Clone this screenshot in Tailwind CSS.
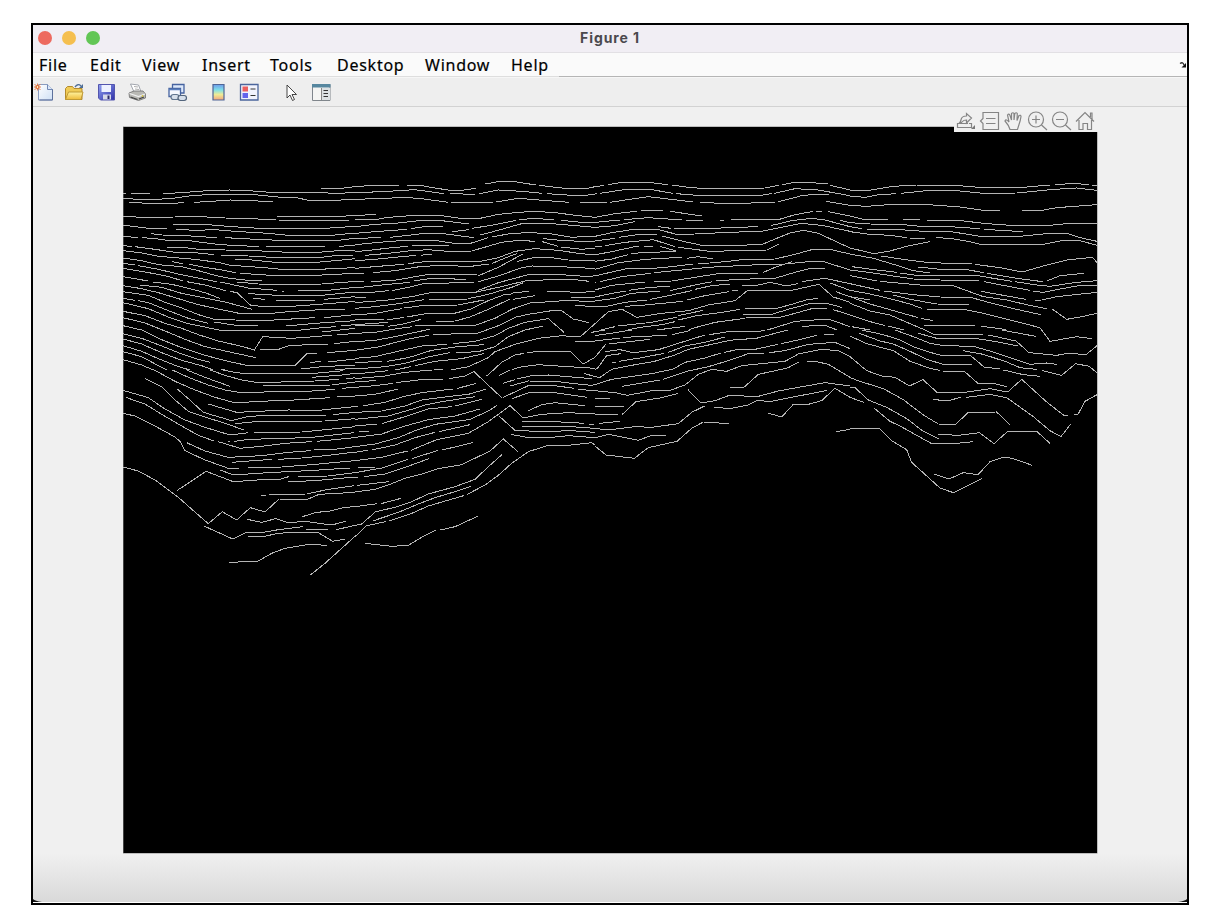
<!DOCTYPE html>
<html lang="en">
<head>
<meta charset="utf-8">
<title>Figure 1</title>
<script src="https://cdn.jsdelivr.net/npm/@tailwindcss/browser@4"></script>
</head>
<body class="bg-white w-[1220px] h-[918px] overflow-hidden pt-[23px] pl-[31px]">
<main class="w-[1158px] h-[882px] border-2 border-black bg-[#f0f0f0] flex flex-col">
  <header class="h-[28px] shrink-0 bg-[#f1eef4] border-b border-[#e2e0e4] grid grid-cols-[1fr_auto_1fr] items-center">
    <div class="flex gap-[10px] pl-[5px] pb-[2px]">
      <span class="size-[14px] rounded-full bg-[#ed6a5f]"></span>
      <span class="size-[14px] rounded-full bg-[#f5bf4f]"></span>
      <span class="size-[14px] rounded-full bg-[#62c655]"></span>
    </div>
    <h1 class="font-[Inter,sans-serif] font-bold text-[14px] leading-none tracking-[0.9px] text-[#4b494d] pb-[2px]">Figure 1</h1>
  </header>
  <nav class="h-[24px] shrink-0 bg-[#fafafa] flex items-stretch font-['Noto_Sans',sans-serif] text-[16px] leading-[25px] tracking-[0.75px] text-black">
    <div class="grid grid-cols-[51px_52px_60px_68px_67px_88px_86px_48px] pl-[6px] w-[526px] border-b border-[#dedede] [-webkit-text-stroke:0.2px_black]">
      <span>File</span><span>Edit</span><span>View</span><span>Insert</span><span>Tools</span><span>Desktop</span><span>Window</span><span>Help</span>
    </div>
    <div class="grow border-b border-[#b5b5b5] flex justify-end items-center">
      <svg class="w-[8px] h-[8px]" viewBox="0 0 8 8"><path d="M1 2.500Q4 .5 5 4" fill="none" stroke="#333" stroke-width="1.300"/><path d="M7 2v4.500H2.500z" fill="#111"/></svg>
    </div>
  </nav>
  <div class="h-[30px] shrink-0 bg-[#eeeeee] border-b border-[#d2d2d2] border-t border-t-[#f6f6f6]">
    <svg class="w-[310px] h-[28px]" viewBox="33 78 310 28">
      <defs>
        <linearGradient id="paper" x1="0" y1="0" x2="1" y2="1"><stop stop-color="#fff"/><stop offset="1" stop-color="#cfe0f5"/></linearGradient>
        <linearGradient id="jet" x1="0" y1="0" x2="0" y2="1"><stop stop-color="#6e9bea"/><stop offset=".35" stop-color="#7fe0e8"/><stop offset=".65" stop-color="#f0ec94"/><stop offset="1" stop-color="#f2a47c"/></linearGradient>
        <linearGradient id="gold" x1="0" y1="0" x2="0" y2="1"><stop stop-color="#fff3a0"/><stop offset="1" stop-color="#eebb3a"/></linearGradient>
        <linearGradient id="disk" x1="0" y1="0" x2="1" y2="1"><stop stop-color="#8fa0f0"/><stop offset="1" stop-color="#2f30a8"/></linearGradient>
      </defs>
      <g>
        <path d="M38.500 84.500h9l5 5v10.500h-14z" fill="url(#paper)" stroke="#8a9cc0"/>
        <path d="M52.500 89v11h-13" fill="none" stroke="#5d719c"/>
        <path d="M47.500 84.500v5h5" fill="#dce7f8" stroke="#7389b5"/>
        <path d="M34.500 84l6 6M40.500 84l-6 6M37.500 83.500v7M34 87h7" stroke="#e98452"/>
        <circle cx="37.500" cy="87" r="1.500" fill="#fff0c0" stroke="#dd5d24"/>
      </g>
      <g>
        <path d="M65.500 99.500v-11l2-2h5l1.500 2h8v11z" fill="#f0cb56" stroke="#b38a2c"/>
        <path d="M65.500 99.500l3-7.500h14.500l-2 7.500z" fill="url(#gold)" stroke="#c09a35"/>
        <path d="M75 87q3-4 6-1" fill="none" stroke="#4d6d96" stroke-width="1.300"/><path d="M83 84v4h-4z" fill="#4d6d96"/>
      </g>
      <g>
        <path d="M98.500 84.500h16v15.500h-14l-2-2z" fill="url(#disk)" stroke="#5355ae"/>
        <path d="M101.500 85h9.500v7h-9.500z" fill="#edf1ff"/><path d="M103 94.500h8v5h-8z" fill="#d6d9e8"/><path d="M107.500 95.500h2v3.500h-2z" fill="#29296a"/>
      </g>
      <g>
        <path d="M130.500 84l8 1 3 8h-7z" fill="#fff" stroke="#8d929c" stroke-width=".8"/>
        <path d="M129 93l5-2 9 0 2.500 3v4l-7 2.500-9-3z" fill="#b9b9b4" stroke="#777" stroke-width=".9"/>
        <path d="M129.500 93.500l9 3 6.500-2.500" fill="none" stroke="#efefef" stroke-width="1.300"/>
        <path d="M130.500 97l7 2.500M139 99l5-2" stroke="#444" stroke-width="1.200"/><path d="M134 86.500l4 .5M135 89l4 .5" stroke="#999" stroke-width=".8"/>
        <circle cx="142.500" cy="96" r=".9" fill="#d6c445"/>
      </g>
      <g>
        <path d="M172.500 84.500h11.500v8.500h-11.500z" fill="#dce8fa" stroke="#4663a0" stroke-width="1.300"/>
        <path d="M169 88.500h11.500v8h-11.500z" fill="#f5f8ff" stroke="#4663a0" stroke-width="1.300"/><path d="M169 89.500h11.500" stroke="#587ebd" stroke-width="1.500"/>
        <rect x="171" y="94.500" width="8" height="5" rx="2.500" fill="#d6dfeb" stroke="#61758f" stroke-width="1.200"/><rect x="178" y="95.500" width="8.500" height="5" rx="2.400" fill="#d6dfeb" stroke="#52647c" stroke-width="1.200"/>
      </g>
      <path d="M213 84.500h11v15.500h-11z" fill="url(#jet)" stroke="#4f6596" stroke-width="1.200"/>
      <g>
        <path d="M240.500 84.500h17.500v15.500h-17.500z" fill="#f1f3fd" stroke="#4b659c" stroke-width="1.300"/>
        <path d="M242.500 86.500h5.500v5h-5.500z" fill="#ed5f5f"/><path d="M242.500 93h5.500v5h-5.500z" fill="#6464ec"/><path d="M250.500 89h5M250.500 95.500h5" stroke="#333"/>
      </g>
      <path d="M287 85v13l3-3 2.500 5.500 2-1-2.500-5h4.500z" fill="#fff" stroke="#333" stroke-width=".9"/>
      <g>
        <path d="M312.500 84.500h17.500v16h-17.500z" fill="#f5f5f3" stroke="#80868c"/><path d="M312 84h18.500v3.500h-18.500z" fill="#56879f"/><path d="M321.500 88h8.500v12h-8.500z" fill="#dce1e3"/><path d="M321.500 88v12" stroke="#888"/><path d="M323.500 90.500h4.500M323.500 93.500h4.500M323.500 96.500h4.500" stroke="#333"/>
      </g>
    </svg>
  </div>
  <section class="h-[746px] shrink-0 pl-[90px]">
    <svg class="block w-[975px] h-[747px]" viewBox="123 107 975 747">
      <rect x="123" y="126.500" width="974.500" height="727" fill="#8a8a8a"/>
      <rect x="123.500" y="127" width="973.500" height="726" fill="#000"/>
      <g fill="none" stroke="#b4b4b4" shape-rendering="crispEdges">
        <svg x="115" y="170" width="240" height="200" viewBox="0 0 720 600"><path stroke-width="3" d="M24,70 32,70M48,71 104,71M145,71 200,68 290,61 345,60 400,62 480,68 620,68 660,70 720,68M617,57 640,55 680,55 720,50M24,85 70,88 130,88 180,84 230,77 290,73 370,73 430,75 500,82 545,83 580,91 665,91 720,87M43,97 80,99 120,101 170,100 208,98M236,97 290,94 345,90 410,91 440,94 475,93M24,139 80,142 180,141 240,139 330,144 400,146 484,149M487,139 680,139 720,136M493,151 703,151M24,165 60,170 100,175 157,176M174,164 280,164 340,169 400,173 450,176 610,176 680,172 720,168M183,178 240,181 300,179 360,184 460,190 510,195 660,195 700,191 720,190M109,191 140,195 200,196 240,199 307,203M331,203 385,206 440,209 530,212 660,212 720,205M24,199 70,203M82,203 120,206 150,210 230,213 300,222 360,227 433,229M452,230 631,230M672,229 720,226M157,232 210,233 260,239 330,240 400,241 500,246 620,246 680,241 720,240M24,227 50,229M60,230 120,238 180,247 250,249 298,254M319,257 400,258 470,262 620,262 660,257 715,256M24,242 80,249 130,259 180,263 240,268 300,276 330,281M360,268 410,270 470,276 615,276 660,272 720,266M24,264 80,272 130,284 200,290 250,302 300,316 345,325 400,331 440,333M170,275 205,281M222,283 270,292 320,300 362,308M331,284 390,289 450,293 500,298 610,298 720,293M24,280 60,285M70,287 130,298 190,312 240,322 305,335M376,309 430,314 500,317 600,316 720,310M24,295 90,306 150,317 205,333M215,335 270,345 332,362M345,364 366,368 407,406 440,409 530,409 600,404 700,396 720,395M24,320 100,333M114,336 170,343 220,355 270,368 314,385M366,336 430,342 490,344 620,342 680,337 720,335M316,336 400,354 486,361M502,363 506,363M548,363 640,361 720,352M400,370 440,374 500,376 620,376 680,370 720,366M415,385 450,388M483,391 600,391M628,388 720,380M75,345 140,352 200,370 260,382 330,396 412,418M24,347 80,356 130,368 190,386 250,404 310,417 382,432 460,431 520,425 600,420 690,417M24,365 100,376 150,397 200,414 250,434 298,448 360,450 460,451 600,443M628,443 720,434M24,385 60,391M70,392 100,398 160,422 220,445 280,460M298,456 370,467 430,468M514,468 600,460 720,452M24,398 100,416 160,441 220,461 260,469 320,482 540,482 620,473 662,470M679,468 720,464M620,486 720,475M24,424 90,437 150,460 200,475 250,494 310,513 380,529 418,540 443,500 530,505 600,500 652,495M667,495 720,490M436,539 485,540 525,526 638,523M658,521 720,514M24,443 90,459 150,483 210,508 270,530 340,545 422,563M24,467 80,480 130,505 200,533 260,553 330,572 395,586 540,586 578,549 605,549M636,548 720,541M585,577 617,575M640,576 720,567M557,597 620,590 720,585M24,491 80,505 140,528 200,552 250,568 286,577M317,597 360,607M660,600 720,594M24,507 80,522 140,548 200,571 260,587 310,606M24,527 80,544 130,566 180,586 230,602M24,545 80,560 130,587 180,613M24,569 80,585 120,602"/></svg>
        <svg x="115" y="370" width="240" height="220" viewBox="0 0 720 660"><path stroke-width="3" d="M325,0 360,7 400,12 480,10 600,10 685,2M285,0 330,16 380,30 430,38 600,33 672,28M215,0 270,22 345,49M172,0 220,22 280,45 330,60 385,69 470,65 550,66 660,58M680,55 720,52M445,46 540,46 650,45 720,36M118,0 180,34 240,60 300,82 362,99 430,94 520,91 600,86 645,83M667,81 720,78M592,22 680,15 720,10M693,27 720,23M280,102 320,114 365,127 450,123 520,120 610,121 728,109M90,26 140,50 180,90 220,124 270,141 330,160 387,180M187,57 220,86 265,127 350,152 400,139 470,136 632,136M655,134 720,127M360,161 430,154 630,153 720,146M24,61 100,83 150,117 210,150 270,172 345,195 400,188M417,187 560,186 640,178 720,170M32,82 90,102 140,133 200,168 250,196 297,213M310,215 375,235 440,229 510,220 590,215M606,214 720,203M340,215 344,215M358,214 400,208 520,205 600,201 718,188M24,130 60,138 120,168 180,201 195,214 210,242 270,270 340,295 373,295M215,218 270,243 340,262 440,257 520,247 588,242M598,240 660,238 720,230M350,277 470,268M490,268 560,264 640,256 720,246M400,293 500,291 600,283 720,272M316,300 355,315 460,308 580,302 706,294M187,361 273,304 355,335 440,329 495,328 521,320M548,319 640,318 720,308M520,335 600,332 730,320M24,291 70,303 120,330 190,382 250,435 280,461 322,425 365,450 406,413 450,426 492,387 575,389 612,373 720,367M438,376 452,376M462,373 575,372 640,358 718,347M562,440 605,427 640,424 690,412 720,410M397,448 440,457 482,446 520,458 570,454 650,465 693,454M267,468 300,483 353,507 395,486 440,488 490,479 563,470M572,478 640,478M662,479 700,471 720,466M398,499 440,501 480,492 520,487 610,488 653,514 690,507M342,577 428,574 470,550 510,535 590,522 637,527M586,615 630,580 680,535 720,499"/></svg>
        <svg x="355" y="170" width="240" height="200" viewBox="0 0 720 600"><path stroke-width="3" d="M0,50 70,45 131,45M156,45 200,47 240,54 285,61 320,61 362,55M390,42 430,35 480,35 542,45M553,46 620,54 690,57 720,50M0,68 80,65 180,59 230,66 268,71M285,71 360,73M373,71 430,60 500,64 562,70M577,71 680,78 720,72M0,88 90,85 150,82 200,86 280,97M288,98 415,98M424,96 490,85 540,89 643,97M675,98 720,99M0,136 63,134M0,149 60,149 100,142 180,136 260,137 330,147 375,145 430,133 490,127 540,124 600,128 670,137 720,142M0,170 60,163 130,159 210,150 260,152 343,162M352,175 420,164 484,151M493,149 540,145 598,150M617,151 680,157 720,159M292,185 343,179M0,190 60,185 156,178M168,176 200,171 265,170M376,195 440,178 500,161 580,160 640,165 720,172M0,205 78,203M106,202 160,196 200,191 265,191 357,203M0,224 60,218 150,211 240,211 290,219 340,222 400,203M410,201 470,190 530,188 590,192 650,202 720,198M0,245 60,239 110,233 160,229M170,227 282,227M30,256 100,250 160,243 220,239 300,246 350,243 440,217 490,211 540,214M565,206 625,212 720,215M562,215 610,229M618,231 680,238 720,234M0,272 60,268 130,261 182,256M197,256 231,252M368,318 430,292 505,251M0,295 70,289 147,283M158,281 220,274 290,275 375,274 430,263 480,244 540,236 610,241 670,250 720,255M0,310 26,310M55,308 120,302 200,289 280,286 340,290 403,282M412,280 450,264 485,251M485,275 530,264 590,263 640,270 720,273M0,335 27,335M47,334 110,332 170,322 220,313 365,315M370,335 430,318 500,293 530,288 590,289 680,293 720,297M0,354 80,345 165,337M176,333 230,325 332,328M0,368 60,366 102,362M110,362 160,352 210,340 358,338M368,362 430,338 520,314 620,314 700,320 720,317M0,383 34,381M0,398 100,390 170,380 230,367 360,367 430,352 510,333 600,328 660,329 703,334M340,386 400,373 470,352 505,338M475,369 521,364M577,364 680,367 720,364M0,415 60,410 130,401 207,389M221,388 340,387M648,381 720,381M310,405 386,390M0,435 60,430 140,416M148,414 200,407 310,405M660,406 720,410M0,449 88,447M96,450 147,442M155,441 220,430 290,432 345,418 400,392 445,375 475,371M474,388 541,377M0,464 60,460 100,457M0,467 89,465M100,469 150,461 198,448M242,454 300,453 345,441 400,418 465,387M180,465 360,466 420,445 470,418 525,399 570,396 640,391 720,396M0,490 60,487 120,477 172,470M0,515 60,511 120,500 180,487 224,478M235,494 370,489 430,467 480,442 520,433 590,422 620,422 655,447 702,458M0,541 70,531 130,515 180,503 222,496M295,521 360,514 420,497 460,475 510,457 580,446 627,487M0,565 60,560 120,546 200,528 277,523M0,577 80,575M96,574 160,563 230,541 300,531 386,524M303,548 370,545 420,530 460,500 510,480 565,468M0,597 90,590 150,580 220,561 284,548M277,602 340,590 400,563 420,545 480,523 550,505 620,497 675,501 720,461M110,602 168,590M180,587 240,574 320,566 386,551M415,600 440,577 480,555 508,550M516,548 560,543 645,543 685,582 720,562M180,604 265,598M470,600 490,592 550,584 640,590 720,595M660,514 720,514M707,488 720,485"/></svg>
        <svg x="355" y="370" width="240" height="220" viewBox="0 0 720 660"><path stroke-width="3" d="M0,12 100,2M0,26 90,18 150,7 230,0M0,35 62,32M0,52 60,47 115,40M122,38 190,30 265,29M282,26 330,18 357,5 440,83M0,78 60,73 130,57M145,80 200,68 294,57M307,55 362,41M0,108 10,108M25,107 90,97 145,80M0,127 80,123 150,108 200,90 260,82 340,73 392,58M0,148 60,142 100,138 170,118 210,105 260,95 360,80M80,161 160,137 220,117 290,110M300,108 380,88M0,168 65,162M12,186 43,185M0,202 80,192 150,168 220,149 300,138 375,117M0,230 60,222 130,203 180,182 240,163 300,155 345,148 400,123 425,107M0,247 40,240M50,240 120,225 180,203 240,187M252,185 345,164M0,272 80,262 158,243M168,241 245,209 340,190 400,155 465,107 505,144 560,133 640,128 720,132M0,308 80,294 160,268M170,266 250,241M262,240 353,218M10,291 60,291M0,321 10,321M26,320 90,312 150,292 222,266M7,346 101,335M0,366 60,358 100,345 150,325 200,312 250,296 320,284 405,243 445,207 489,245M0,410 67,401M78,401 138,385M0,466 20,462 62,425 120,412 170,395 220,372 300,350 360,328 400,290 442,253M0,500 35,467 92,455M53,453 130,427 190,402 240,383 300,365 347,349M102,453 170,430 220,408 326,377M335,374 390,345 430,316 470,280 520,245 580,226 640,226 710,218 720,225M30,520 110,529 160,526 200,502 242,481M256,480 300,470 370,438M395,18 415,0M432,17 465,0M443,40 480,29M485,27 530,17 580,15 640,20 710,26M687,10 720,20M465,48 520,33 600,34 650,40 710,46 720,43M445,82 520,47 600,47 657,55M668,57 720,63M470,86 520,69 600,68 697,82M520,122 560,104 600,98 690,107M433,139 480,181 560,185 650,182 720,187M500,156 600,155 688,160M702,162 718,162M502,169 650,170 720,175M467,193 520,203 590,202 640,197 720,203"/></svg>
        <svg x="595" y="170" width="255" height="160" viewBox="0 0 765 480"><path stroke-width="3" d="M0,50 28,46M38,44 90,36 150,36 218,44M231,45 280,52 330,56 510,54 551,46M562,44 600,37 650,38 698,42M706,46 765,60M0,71 5,71M15,70 80,60 170,59 234,70M244,71 330,78 490,77 530,71M538,70 600,56 670,60 765,77M0,99 36,98M46,97 110,87 160,80 220,87 293,96M315,97 400,101 540,97M548,96 620,77 670,72 703,75M692,94 765,106M0,142 60,131 125,124M137,123 160,121 203,122M225,124 321,138M663,123 680,123M699,125 765,138M0,157 75,150M86,149 160,143 262,150M273,151 325,151M375,151 386,151M409,149 550,149 600,134 655,124M0,172 60,167 120,155M190,170 228,175M236,175 350,175 488,170M527,167 590,152 650,145 690,150 765,170M735,151 765,158M0,199 50,188 110,179 190,179 245,193 300,192 400,187 500,184 560,172 620,160 680,166 765,184M0,213 60,205M71,202 140,192 185,194M202,198 260,213 330,228 500,224 545,205 585,189 625,181 670,190 765,234M0,231 20,229M30,227 90,217 175,209 240,230M250,232 345,244 515,240 553,222M0,254 40,247 120,230 132,230M148,229 173,229M195,229 243,243M108,250 170,247 243,244M0,274 50,267 100,254M0,298 70,278 150,268 260,262M275,265 310,260 353,267M0,318 50,306 100,295 165,296 230,290 295,282M310,282 400,274 450,268 540,267 600,253 650,239 700,237 765,252M0,336 4,336M16,335 80,320 167,310M178,308 240,302 340,292 490,284 570,282 640,275 690,276 765,300M0,360 50,346 151,336M176,335 230,333 300,322 370,311 493,309M503,308 545,290 590,275M540,325 600,307 640,297 692,294M0,381 50,370 92,363M102,361 165,352 225,349M225,362 300,345 352,335M362,333 430,328 540,325M0,393 60,385 110,370 196,363M440,345 490,345 525,337 575,348 608,341M620,335 690,325 765,341M0,410 30,410 90,397 155,390M165,388 230,375 290,362M300,358 350,347 405,342M90,409 150,405 265,394M275,390 330,377 403,365M412,362 430,362M0,461 40,425 82,418 125,442 200,430 280,422 340,405 420,392 458,361 590,361 640,350 672,343 715,381 765,397M0,484 60,470M70,468 170,457 245,442M250,437 325,421M80,484 130,473 200,464 240,455M250,450 300,438 380,427 436,418M450,414 550,414 600,400 640,388 670,386M443,432 533,432 590,415 640,402 695,400 740,412M170,482 270,469M453,442 555,442 600,430 650,416 695,416M715,419 765,435M270,484 300,473 360,457 450,445M510,482 550,470 600,454 700,447 765,470M705,339 765,361M722,365 765,380M620,469 690,466 765,495"/></svg>
        <svg x="595" y="330" width="255" height="180" viewBox="0 0 765 540"><path stroke-width="3" d="M0,5 30,0M0,17 60,8 110,0M0,33 75,24M85,22 130,20 215,16M42,42 110,34 165,28M230,14 285,2M30,65 75,59 115,68 190,59 250,40 330,15M343,14 400,5 490,5 530,-5M51,98 62,96M72,94 140,83 208,70M218,68 270,48 330,37 390,21M0,164 50,148 170,131 235,117 270,97 330,84 378,69M388,67 430,58 480,58 549,43M558,41 600,32 665,16M687,14 716,14M0,138 12,144 50,118 110,106 175,95 240,75 280,58 350,43 400,32 430,28 480,26 578,0M80,169 195,150M205,148 280,123 340,110 400,92 460,71 509,69M523,68 570,62 640,43 720,37 765,56M0,82 32,43M0,118 8,114 35,77 78,71M0,182 60,188 98,196 170,182 228,180 270,165 310,133 350,118 395,124 440,107 500,101 570,94 610,72 680,58 730,62 765,80M405,172 448,171 490,133 550,120 580,113 613,95M637,94 665,95 700,103 745,130 765,142M82,253 123,215 195,204 248,191M279,179 318,219 360,212 400,197 490,199 550,183 610,172 690,158 765,168M357,231 403,236 460,225 485,212 530,214 600,200 697,181M518,249 560,261 594,224 640,223 680,212 720,175 765,202M0,205 46,205M0,229 86,230M0,253 70,253M13,280 76,274M0,295 40,300 120,290 170,292 250,281 290,247 331,227M0,323 40,313 130,331 170,316 212,316M0,348 33,375 118,385 160,353 246,334 290,295 325,276 403,281M724,305 765,298"/></svg>
        <svg x="850" y="170" width="247" height="160" viewBox="0 0 741 480"><path stroke-width="3" d="M0,60 50,62 130,49 200,45 300,45 400,53 520,52 600,45M614,43 680,41 717,44M726,46 741,47M0,78 45,82 80,75 137,71M154,70 220,63 320,62 400,70 500,69 600,59 680,54 741,61M0,106 50,109 130,103 250,105 330,111 400,121 451,123M516,123 570,122 620,113 741,104M0,138 40,148 114,149M159,149 210,149M230,151 335,152 400,160 480,166 600,166 660,160 741,159M0,158 60,162 150,163 220,170 300,170 390,176M401,178 520,185M0,170 35,176M50,178 150,179 220,184 310,186 390,199 500,200 590,191 650,190 690,203 741,214M0,185 50,192 120,196 170,203M181,204 225,204M259,203 300,205 360,215 400,225 580,223 640,211 690,212 741,226M0,234 72,251 120,243 170,229 240,215M0,252 70,265 140,286 190,302 240,309M93,258 180,271 240,278 365,282M375,283 450,293 517,306 580,288 650,270 728,262 741,278M205,291 260,297 350,299 403,308M412,310 500,325 578,335M590,333 630,317 703,310M6,290 80,300 142,307M150,309 200,316 380,316 430,325 485,334M495,335 560,345 600,349 680,337 741,332M0,300 70,309 130,318 190,327 270,330 388,333M403,335 480,350 540,361M550,364 580,367 620,359 680,348 741,345M0,317 80,333M90,334 165,341 230,347 312,348 400,380 470,390 530,404 590,416M393,364 460,376 527,388M555,391 575,390 620,380 741,367M0,341 90,361M102,363 190,374 270,381 365,383 430,401 500,418 573,434M0,361 60,372 120,386 180,402 215,415M0,380 60,390 M130,375 180,388 260,402 358,403M225,417 340,418 400,430 480,450 570,473 580,487M0,380 60,402 120,419 205,443M212,445 250,452M0,400 60,423 120,435 180,461 230,482M218,465 305,466 374,468M394,469 450,476 557,499M0,435 50,452 105,467M5,470 60,480M115,468 170,482M605,416 650,448 690,441 741,430"/></svg>
        <svg x="850" y="330" width="247" height="180" viewBox="0 0 741 540"><path stroke-width="3" d="M205,10 260,25 380,26 440,35 503,48M415,15 498,33 537,68 620,76 660,69 707,75 741,47M225,0 250,13 400,13M455,0 557,19M575,0 600,34 680,20 725,26M35,0 100,14 150,30 190,50 240,67 270,75 360,75 402,111 450,117M460,120 520,134 571,139M135,0 190,20 240,40 280,47 370,49 430,66 540,103 590,99 620,103M28,10 90,33 130,42 180,64 230,88 280,103 367,105M0,18 50,41 130,62 180,94 240,115 270,121M278,124 343,124 385,161 430,160 470,170M338,62 400,73 470,96 510,113 560,118M577,122 635,136 677,101 718,109 741,129M0,80 50,122 95,138 135,142 178,168 219,149 260,186 350,186 420,176 473,186 515,148 590,216 640,255 655,257M671,253 684,253 705,214 741,194M0,143 30,154 100,176 160,209 220,255 265,282 317,283 355,247 440,246 481,286M0,171 15,173 55,210 110,232 170,266 220,304 268,328M0,202 41,217M73,235 120,274 150,288 245,341 300,342 369,335M263,313 325,316 388,308 432,341 473,304 560,304 600,340M250,209 295,212 332,202M348,202 420,193 470,203 550,260 600,302 633,320 661,283M0,297 88,295 125,332 170,359 185,397 270,474 310,488 395,446M253,432 297,447 340,428 384,434 420,395 463,381 490,386 547,406"/></svg>
      </g>
      <rect x="954" y="108" width="144" height="24" fill="#f0f0f0"/>
      <g fill="none" stroke="#858585" stroke-width="1.200">
        <path d="M959.500 123.500h-2v4h14v-4h-2.500M959 123.500q2.500-.5 3.500-2t4-1.500v3l5-5-5-4.500v2.500q-5 0-5.500 4-.5 2-2 3.500h9"/><path d="M975 125v4h-4z" fill="#777" stroke="none"/>
        <path d="M983 112.500h15.500v17h-15.500v-6l-2.500-2.500 2.500-2.500zM986 118.500h9.500M986 123.500h9.500"/>
        <path d="M1010 129.500q-1-4-5-8.500 1-2.500 4 1l-1.500-7q1.500-2 2.500.5l1.500 4.500v-6.500q1.500-1.500 2.500 0v6.500l.8-6.500q1.500-1.500 2.500 0l-.3 7 2-5q2-.8 2 1-.5 4-2 8l-1.500 5z"/>
        <circle cx="1036" cy="119.500" r="7.500"/><path d="M1041.500 125l5.500 5M1032 119.500h8M1036 115.500v8"/>
        <circle cx="1060" cy="119.500" r="7.500"/><path d="M1065.500 125l5.500 5M1056 119.500h8"/>
        <path d="M1076 121.500l9-9 9 9M1079 120v9.500h4v-6h4.500v6h4v-9.500M1090.500 117v-4h1.500v6"/>
      </g>
    </svg>
  </section>
  <footer class="grow border-b border-white bg-linear-to-b from-[#f0f0f0] to-[#d9d9d9] flex items-end justify-between mt-px">
    <svg class="w-[9px] h-[3px]" viewBox="0 0 9 3"><path d="M0 0Q2 2 9 3H0z" fill="#111"/></svg>
    <svg class="w-[9px] h-[3px]" viewBox="0 0 9 3"><path d="M9 0Q7 2 0 3h9z" fill="#111"/></svg>
  </footer>
</main>
</body>
</html>
